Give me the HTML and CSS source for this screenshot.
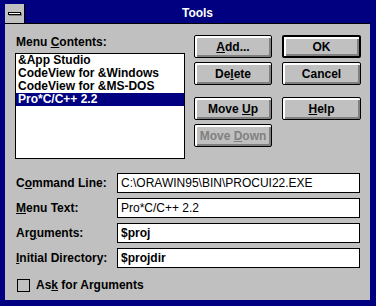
FILE: index.html
```html
<!DOCTYPE html>
<html lang="en">
<head>
    <meta charset="UTF-8">
    <title>Tools</title>
    <link rel="stylesheet" href="styles.css">
</head>
<body>
    <div class="window">
        <div class="titlebar">
            <div class="sysmenu"><span class="sysmenu-bar"></span></div>
            <div class="title">Tools</div>
        </div>
        <div class="client">
            <div class="top">
                <div class="contents">
                    <div class="label">Menu <u>C</u>ontents:</div>
                    <ul class="listbox">
                        <li>&amp;App Studio</li>
                        <li>CodeView for &amp;Windows</li>
                        <li>CodeView for &amp;MS-DOS</li>
                        <li class="selected">Pro*C/C++ 2.2</li>
                    </ul>
                </div>
                <div class="buttons">
                    <button class="btn"><u>A</u>dd...</button>
                    <button class="btn default">OK</button>
                    <button class="btn">De<u>l</u>ete</button>
                    <button class="btn">Cancel</button>
                    <button class="btn spaced">Move <u>U</u>p</button>
                    <button class="btn spaced"><u>H</u>elp</button>
                    <button class="btn disabled">Move <u>D</u>own</button>
                </div>
            </div>

            <div class="fields">
                <div class="field">
                    <div class="field-label">C<u>o</u>mmand Line:</div>
                    <div class="edit">C:\ORAWIN95\BIN\PROCUI22.EXE</div>
                </div>
                <div class="field">
                    <div class="field-label"><u>M</u>enu Text:</div>
                    <div class="edit">Pro*C/C++ 2.2</div>
                </div>
                <div class="field">
                    <div class="field-label">Ar<u>g</u>uments:</div>
                    <div class="edit bold">$proj</div>
                </div>
                <div class="field">
                    <div class="field-label"><u>I</u>nitial Directory:</div>
                    <div class="edit bold">$projdir</div>
                </div>
            </div>

            <div class="check">
                <span class="checkbox"></span>
                <span>As<u>k</u> for Arguments</span>
            </div>
        </div>
    </div>
</body>
</html>
```

FILE: styles.css
```css
body {
    margin: 0;
    font-family: "Liberation Sans", Arial, sans-serif;
    font-size: 12px;
    font-weight: bold;
    color: #000;
}
u {
    text-decoration: underline;
    text-decoration-thickness: 1px;
    text-underline-offset: 1px;
}
.window {
    width: 376px;
    height: 306px;
    box-sizing: border-box;
    background: #000080;
    padding: 4px 6px 6px 5px;
    display: flex;
    flex-direction: column;
}
.titlebar {
    display: flex;
    height: 19px;
    border-bottom: 1px solid #000;
}
.sysmenu {
    width: 19px;
    background: #c0c0c0;
    border-right: 1px solid #000;
    display: flex;
    align-items: center;
    justify-content: center;
}
.sysmenu-bar {
    width: 11px;
    height: 1px;
    background: #fff;
    border: 1px solid #000;
    box-shadow: 1px 1px 0 #808080;
}
.title {
    flex: 1;
    color: #fff;
    text-align: center;
    line-height: 19px;
}
.client {
    flex: 1;
    background: #c0c0c0;
    padding: 10px 9px 0 10px;
}
.top {
    display: flex;
    align-items: flex-start;
    gap: 9px;
}
.contents {
    width: 170px;
}
.label {
    line-height: 16px;
    padding-left: 1px;
}
.listbox {
    list-style: none;
    margin: 3px 0 0;
    padding: 0;
    height: 104px;
    background: #fff;
    border: 1px solid #000;
}
.listbox li {
    line-height: 13px;
    height: 13px;
    padding-left: 2px;
    white-space: nowrap;
}
.listbox .selected {
    background: #000080;
    color: #fff;
}
.buttons {
    display: grid;
    grid-template-columns: 78px 79px;
    column-gap: 10px;
    row-gap: 4px;
    margin-top: 1px;
}
.btn {
    height: 23px;
    padding: 0;
    font: inherit;
    color: #000;
    background: #c0c0c0;
    border: 1px solid #000;
    border-radius: 2px;
    box-shadow: inset 1px 1px 0 #fff, inset 2px 2px 0 #fff, inset -1px -1px 0 #808080, inset -2px -2px 0 #808080;
}
.btn.default {
    border-width: 2px;
}
.btn.spaced {
    margin-top: 8px;
}
.btn.disabled {
    color: #808080;
}
.fields {
    display: flex;
    flex-direction: column;
    gap: 5px;
    margin-top: 14px;
}
.field {
    display: flex;
    align-items: center;
}
.field-label {
    width: 101px;
    padding-left: 1px;
}
.edit {
    width: 243px;
    height: 20px;
    box-sizing: border-box;
    background: #fff;
    border: 1px solid #000;
    padding-left: 3px;
    line-height: 18px;
    font-weight: normal;
    white-space: nowrap;
}
.edit.bold {
    font-weight: bold;
}
.check {
    display: flex;
    align-items: center;
    gap: 6px;
    margin-top: 10px;
    padding-left: 2px;
}
.checkbox {
    width: 11px;
    height: 11px;
    border: 1px solid #000;
    background: #c0c0c0;
}
```
